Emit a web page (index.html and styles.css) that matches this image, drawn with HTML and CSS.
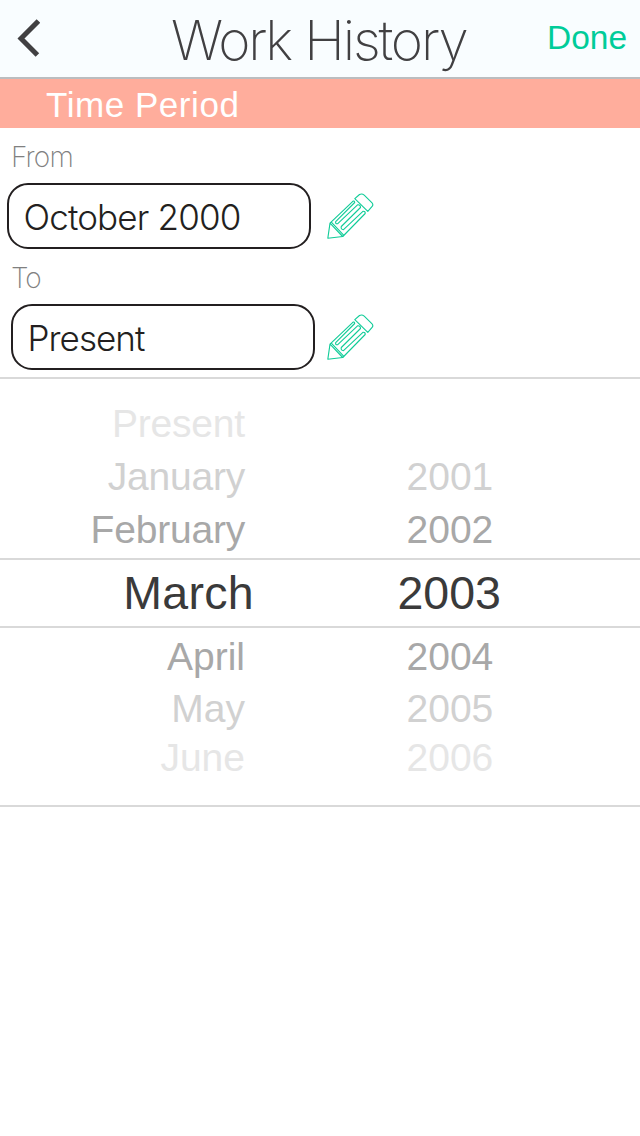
FILE: index.html
```html
<!DOCTYPE html>
<html lang="en">
<head>
<meta charset="utf-8">
<title>Work History</title>
<link rel="stylesheet" href="styles.css">
</head>
<body>
<svg class="defs" width="0" height="0" aria-hidden="true">
  <symbol id="pencil" viewBox="0 0 48 48">
    <path d="M.8 45.3 3 30.2 15.7 43.5 Z"/>
    <path d="M3 30.2 26.1 8.1Q27.5 7.7 27.7 9.5L8.7 28.7Q8.1 31 10.5 30.8L30.8 11.7Q33.5 11.5 33.5 14.5L14.3 33.5Q13.5 36.5 16.5 36.7L35.9 18.3Q38.5 18.1 38.2 20.5L15.7 43.5"/>
    <path d="M4.3 29.1 16.9 42.3"/>
    <path d="M27.8 5.7 32.5 1.5Q35 .3 37.2 2.1L44.8 9.7Q46.8 11.7 44.9 13.7L40.8 18.3Z"/>
  </symbol>
</svg>
<header class="nav">
  <a class="back" href="#" aria-label="Back">
    <svg width="24" height="40" viewBox="0 0 24 40"><path d="M22.4 3 5 20.5 21.4 37"/></svg>
  </a>
  <h1 class="title">Work History</h1>
  <a class="done" href="#">Done</a>
</header>
<h2 class="section">Time Period</h2>
<main>
  <div class="field">
    <div class="label">From</div>
    <div class="entry">
      <div class="box"><span class="value">October 2000</span></div>
      <svg class="pencil"><use href="#pencil"/></svg>
    </div>
  </div>
  <div class="field to">
    <div class="label">To</div>
    <div class="entry">
      <div class="box"><span class="value present">Present</span></div>
      <svg class="pencil"><use href="#pencil"/></svg>
    </div>
  </div>
  <div class="picker">
    <div class="row far"><span>Present</span></div>
    <div class="row mid"><span>January</span><span>2001</span></div>
    <div class="row near"><span>February</span><span>2002</span></div>
    <div class="row selected"><span>March</span><span>2003</span></div>
    <div class="row near below"><span>April</span><span>2004</span></div>
    <div class="row mid below"><span>May</span><span>2005</span></div>
    <div class="row far below"><span>June</span><span>2006</span></div>
  </div>
</main>
</body>
</html>
```
FILE: styles.css
```css
* { box-sizing: border-box; }
body { margin: 0; background: #fff; font-family: "Liberation Sans", Arial, sans-serif; }
a { text-decoration: none; }
.defs { display: block; }
.nav {
  display: grid;
  grid-template-columns: 171px 1fr 93px;
  height: 79px;
  background: #f9fdff;
  border-bottom: 2px solid #bbbdc0;
}
.back { padding: 18px 0 0 16px; }
.back svg { display: block; fill: none; stroke: #414042; stroke-width: 5; }
.title {
  margin: 0;
  font: 200 55px/80px Inter, sans-serif;
  letter-spacing: -2.15px;
  color: #414042;
  white-space: nowrap;
}
.done { font-size: 33.5px; line-height: 76px; color: #00cc99; }
.section {
  margin: 0;
  height: 49px;
  padding-left: 46px;
  background: #ffad9c;
  color: #fff;
  font-size: 35px;
  font-weight: 400;
  line-height: 52px;
  letter-spacing: 0.55px;
}
.field { height: 121px; padding-left: 7px; }
.label {
  height: 55px;
  padding-left: 4px;
  font: 250 28px/58px Inter, sans-serif;
  letter-spacing: -0.8px;
  color: #808080;
}
.entry { display: flex; }
.to { padding-left: 11px; }
.to .label { padding-left: 0; letter-spacing: -1.2px; }
.box {
  width: 304px;
  height: 66px;
  border: 2px solid #231f20;
  border-radius: 21px;
  padding-left: 14.5px;
}
.value { font: 300 35px/65px Inter, sans-serif; letter-spacing: -0.85px; color: #231f20; }
.present { letter-spacing: -0.95px; }
.pencil {
  width: 48px;
  height: 48px;
  margin: 10px 0 0 16px;
  fill: none;
  stroke: #10cc98;
  stroke-width: 1.1;
  stroke-linejoin: round;
  overflow: visible;
}
.to .pencil { margin-left: 12px; }
.picker {
  height: 430px;
  margin-top: 7px;
  padding-top: 18px;
  border-top: 2px solid #d9d9d9;
  border-bottom: 2px solid #d9d9d9;
}
.row {
  display: grid;
  grid-template-columns: 245px 1fr;
  column-gap: 161.5px;
  height: 53px;
  font-size: 39px;
  line-height: 53px;
  letter-spacing: -0.2px;
}
.row span:first-child { text-align: right; }
.row span + span { letter-spacing: 0; }
.below { height: 52px; letter-spacing: 0; }
.far { color: #e6e6e6; }
.mid { color: #d1d1d1; }
.near { color: #a8a8a8; }
.far.below { height: 48px; line-height: 48px; }
.selected {
  grid-template-columns: 254px 1fr;
  column-gap: 143.5px;
  height: 70px;
  margin: 2px 0;
  border-top: 2px solid #d9d9d9;
  border-bottom: 2px solid #d9d9d9;
  color: #3a3a3a;
  font-size: 46.5px;
  line-height: 67px;
  letter-spacing: 0.3px;
}
```
